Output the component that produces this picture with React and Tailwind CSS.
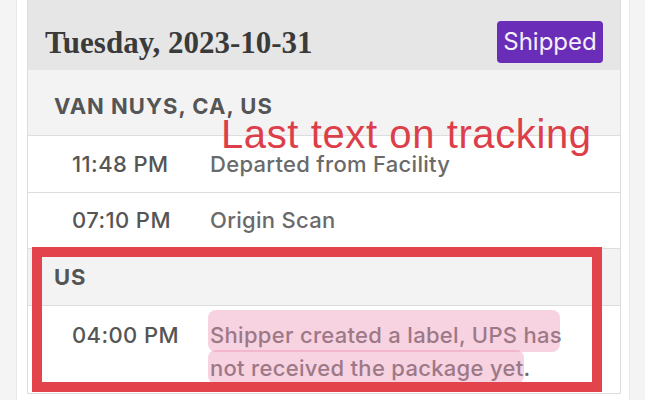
import React from "react";

const events = [
  {
    place: "VAN NUYS, CA, US",
    rows: [
      { time: "11:48 PM", text: "Departed from Facility" },
      { time: "07:10 PM", text: "Origin Scan" },
    ],
  },
];

function Row({ time, children, className = "" }) {
  return (
    <div className={`flex border-b border-[#dddddd] bg-white pl-[44px] ${className}`}>
      <p className="w-[138px] shrink-0 tracking-[0.4px] text-[#555555]">{time}</p>
      <div className="tracking-[0.3px] text-[#6a6a6a]">{children}</div>
    </div>
  );
}

export default function App() {
  return (
    <div
      className="h-[400px] w-[645px] overflow-hidden bg-[#f4f4f4] text-[22px] font-medium"
      style={{ fontFamily: "Inter, 'Liberation Sans', sans-serif" }}
    >
      <div className="ml-[16px] h-[400px] w-[614px] border-x border-[#e8e8e8] bg-white pl-[10px] pr-[8px]">
        <div className="relative border border-t-0 border-[#dcdcdc]">
          {/* day header */}
          <div className="flex h-[70px] items-center justify-between bg-[#e6e6e6] pl-[17px] pr-[17px] pt-[14px]">
            <h2
              className="text-[31px] font-bold leading-none text-[#3a3a3a]"
              style={{ fontFamily: "'Liberation Serif', serif" }}
            >
              Tuesday, 2023-10-31
            </h2>
            <span className="flex h-[42px] w-[106px] items-center justify-center rounded-[4px] bg-[#6a2db8] text-[24px] font-normal text-[#f4f0fa]">
              Shipped
            </span>
          </div>

          {events.map((ev) => (
            <div key={ev.place}>
              <div className="flex h-[66px] items-center border-b border-[#dddddd] bg-[#f3f3f3] pl-[26px] pt-[8px] font-bold tracking-[1px] text-[#555555]">
                {ev.place}
              </div>
              <Row time={ev.rows[0].time} className="h-[57px] items-center">
                {ev.rows[0].text}
              </Row>
              <Row time={ev.rows[1].time} className="h-[56px] items-center">
                {ev.rows[1].text}
              </Row>
            </div>
          ))}

          <div className="flex h-[57px] items-center border-b border-[#dddddd] bg-[#f3f3f3] pl-[26px] font-bold tracking-[1px] text-[#555555]">
            US
          </div>
          <Row time="04:00 PM" className="h-[87px] border-b-0 pt-[13px] leading-[33px]">
            Shipper created a label, UPS has
            <br />
            not received the package yet.
          </Row>

          {/* pink marker strokes */}
          <div className="absolute left-[180px] top-[310px] h-[42px] w-[352px] rounded-[8px] bg-[#ea8fb2]/40" />
          <div className="absolute left-[180px] top-[350px] h-[34px] w-[316px] rounded-[8px] bg-[#ea8fb2]/40" />

          {/* annotation */}
          <p
            className="absolute left-[193px] top-[114px] text-[40px] font-normal leading-none tracking-[0.6px] text-[#dc3f49]"
            style={{ fontFamily: "'Liberation Sans', Arial, sans-serif" }}
          >
            Last text on tracking
          </p>
          <div className="absolute left-[4px] top-[247px] h-[145px] w-[570px] border-[10px] border-[#e3434b]" />
        </div>
      </div>
    </div>
  );
}
